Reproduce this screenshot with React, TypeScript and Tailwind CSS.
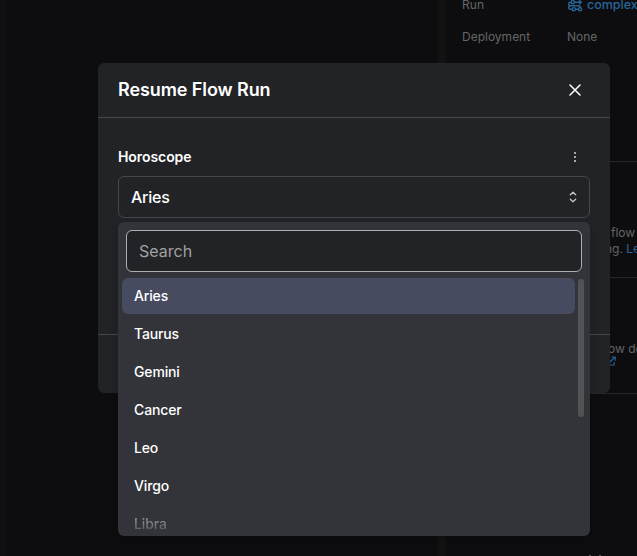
import React from "react";

const signs = ["Aries", "Taurus", "Gemini", "Cancer", "Leo", "Virgo"];

function FlowRunIcon() {
  return (
    <svg className="h-4 w-4 shrink-0" viewBox="0 0 16 16" fill="none" stroke="currentColor" strokeWidth="1.4">
      <circle cx="5.8" cy="5.2" r="1.6" />
      <path d="M7.5 5.2H14M12.2 3.2L14.3 5.2L12.2 7.2" />
      <path d="M4.2 5.2C1 5.2 1 8.7 3.5 8.7H11.5C13 8.7 13.3 9.5 13.3 10.5M3.5 8.7C1 8.7 1 12.2 3.5 12.2H5.2M8.4 12.2H11.4" />
      <circle cx="6.8" cy="12.2" r="1.6" />
      <circle cx="13" cy="12.2" r="1.6" />
    </svg>
  );
}

function Backdrop() {
  return (
    <div className="flex h-full text-xs leading-4 text-[#656566]">
      <div className="w-[7px] bg-[#101012]" />
      <div className="w-[431px]" />
      <div className="w-2 bg-[#121213]" />
      <div className="flex flex-1 flex-col overflow-hidden">
        <div className="flex h-[162px] shrink-0 flex-col gap-4 border-b border-[#252526] pl-4">
          <div className="-mt-[3px] flex h-4">
            <span className="w-[105px] shrink-0 tracking-[0.01em]">Run</span>
            <span className="flex gap-1 whitespace-nowrap text-[#276599]">
              <FlowRunIcon />
              <span className="text-[12.5px] font-medium">complex-flow</span>
            </span>
          </div>
          <div className="flex h-4">
            <span className="w-[105px] shrink-0">Deployment</span>
            <span>None</span>
          </div>
        </div>
        <div className="h-[116px] shrink-0 whitespace-nowrap border-b border-[#252526] pl-[165px] pt-[63px]">
          <p>flow run</p>
          <p className="-ml-[6px]">
            ng. <span className="text-[#276599]">Learn</span>
          </p>
        </div>
        <div className="h-[116px] shrink-0 whitespace-nowrap border-b border-[#252526] pl-[162px] pt-[63px]">
          <p>ow details</p>
          <svg className="-mt-px ml-[-2px] h-2.5 w-2.5 text-[#276599]" viewBox="0 0 10 10" fill="none" stroke="currentColor" strokeWidth="1.1">
            <path d="M4 1.8H1v7.2h7.2V6M5.4 1H9.2V4.8M9 1L3.5 6.5" />
          </svg>
        </div>
        <div className="flex flex-1 items-end gap-2 pl-[143px]">
          <span className="h-px w-0.5 bg-[#555556]" />
          <span className="h-px w-0.5 bg-[#555556]" />
        </div>
      </div>
    </div>
  );
}

function Dropdown() {
  return (
    <div className="absolute left-[118px] top-[222px] flex h-[314px] w-[472px] flex-col overflow-hidden rounded-md bg-[#333439] shadow-[0_4px_12px_rgba(0,0,0,0.2)]">
      <div className="px-2 pt-2">
        <input
          className="block h-[42px] w-full rounded-md border border-[#aeb0b2] bg-[#222327] px-3 text-base text-white outline-none placeholder:text-[#a1a1a1]"
          placeholder="Search"
        />
      </div>
      <div className="flex min-h-0 flex-1 pl-1 pt-1.5">
        <ul className="flex w-[453px] flex-col gap-0.5 text-sm font-medium tracking-[-0.01em] text-white">
          {signs.map((sign, index) => (
            <li
              key={sign}
              className={`flex h-9 shrink-0 items-center rounded-md px-3 ${index === 0 ? "bg-[#464b5f]" : ""}`}
            >
              {sign}
            </li>
          ))}
          <li className="flex h-9 shrink-0 items-center bg-gradient-to-b from-[#a5a6a9] from-25% to-[#4f5054] to-75% bg-clip-text px-3 text-transparent">
            Libra
          </li>
        </ul>
        <div className="ml-[3px] mt-px h-[138px] w-1.5 rounded-full bg-[#525355]" />
      </div>
    </div>
  );
}

function Modal() {
  return (
    <div className="absolute left-[98px] top-[63px] flex h-[330px] w-[512px] flex-col overflow-hidden rounded-md bg-[#222327] text-white">
      <header className="flex h-[55px] items-center justify-between border-b border-[#46474b] px-5">
        <h2 className="text-lg font-semibold tracking-[-0.005em]">Resume Flow Run</h2>
        <svg className="mr-[9px] h-3 w-3" viewBox="0 0 12 12" fill="none" stroke="currentColor" strokeWidth="1.5" strokeLinecap="round">
          <path d="M1 1L11 11M11 1L1 11" />
        </svg>
      </header>
      <main className="flex-1 px-5 pt-[29px]">
        <div className="flex h-5 items-center justify-between">
          <label className="text-sm font-semibold tracking-[-0.005em]">Horoscope</label>
          <svg className="mr-3.5 h-3 w-0.5" viewBox="0 0 2 12" fill="#a8a8aa">
            <path d="M0 1h2v2H0zM0 5h2v2H0zM0 9h2v2H0z" />
          </svg>
        </div>
        <div className="mt-[9px] flex h-[42px] items-center justify-between rounded-md border border-[#46474b] px-3">
          <span className="text-base font-medium tracking-[-0.015em]">Aries</span>
          <svg className="h-3 w-2" viewBox="0 0 8 12" fill="none" stroke="#c7c7c8" strokeWidth="1.3" strokeLinecap="round" strokeLinejoin="round">
            <path d="M1.3 3.7L4 1.2L6.7 3.7M1.3 8.3L4 10.8L6.7 8.3" />
          </svg>
        </div>
      </main>
      <footer className="h-[59px] border-t border-[#46474b]" />
    </div>
  );
}

export default function App() {
  return (
    <div className="relative h-[556px] w-[637px] overflow-hidden bg-[#0d0d0f] font-['Inter',sans-serif]">
      <Backdrop />
      <Modal />
      <Dropdown />
    </div>
  );
}
